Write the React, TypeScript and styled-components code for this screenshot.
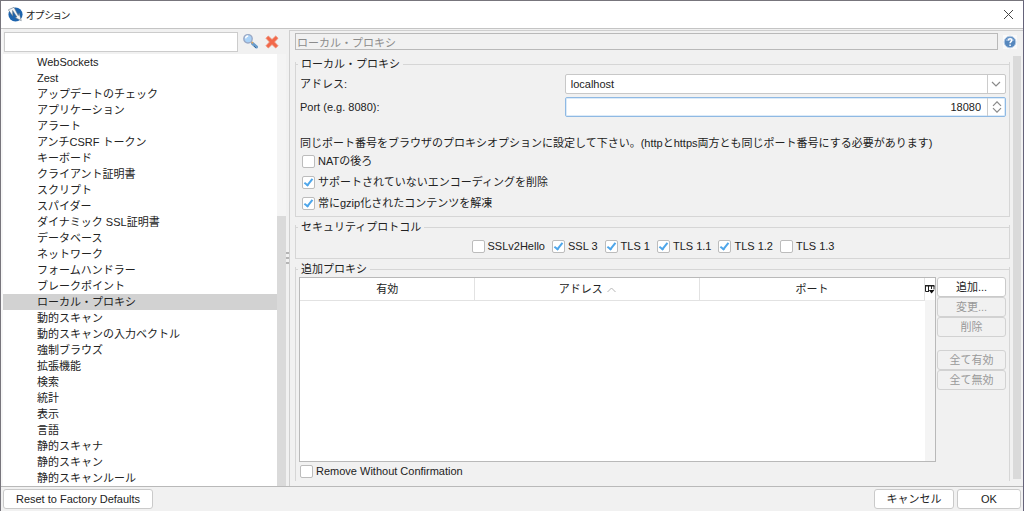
import React from "react";
import styled, { createGlobalStyle, css } from "styled-components";

const GlobalStyle = createGlobalStyle`
  *, *::before, *::after { box-sizing: border-box; }
  body {
    margin: 0;
    background: #f1f1f1;
    color: #222;
    font: 11px/16px "Liberation Sans", "Noto Sans CJK JP", sans-serif;
  }
  button, input, select { font: inherit; color: inherit; margin: 0; }
`;

const line = "#d6d6d6";

const Dialog = styled.div`
  min-height: 100vh;
  display: flex;
  flex-direction: column;
  border: 1px solid #77757c;
  border-right-color: #65637a;
`;

const TitleBar = styled.header`
  height: 28px;
  padding: 0 9px 0 7px;
  display: flex;
  align-items: center;
  gap: 3px;
  background: #fff;
  border-bottom: 1px solid #c4c4c4;
`;

const Title = styled.h1`
  flex: 1;
  margin: 0;
  color: #222;
  font: 400 10px/16px "Noto Sans CJK JP", sans-serif;
  font-feature-settings: "palt";
`;

const IconButton = styled.button`
  display: flex;
  align-items: center;
  justify-content: center;
  padding: 0;
  border: 0;
  background: none;
`;

const Main = styled.main`
  flex: 1;
  display: grid;
  grid-template-columns: 285px 3px minmax(0, 1fr);
`;

const Sidebar = styled.nav`
  display: flex;
  flex-direction: column;
  border-left: 2px solid #f7f7f7;
`;

const SearchRow = styled.form`
  height: 25px;
  display: flex;
  align-items: center;
  gap: 6px;
  padding: 0 7px 0 1px;
`;

const SearchInput = styled.input`
  flex: 1;
  min-width: 0;
  height: 20px;
  margin-right: -2px;
  border: 1px solid #ccc;
  background: #fff;
  padding: 0 4px;
`;

const TreeArea = styled.div`
  flex: 1;
  display: flex;
  background: #fff;
`;

const Tree = styled.ul`
  flex: 1;
  margin: 0;
  padding: 0;
  list-style: none;
`;

const TreeItem = styled.li<{ $selected?: boolean }>`
  height: 16px;
  padding-left: 34px;
  white-space: nowrap;
  background: ${(p) => (p.$selected ? "#d2d2d2" : "transparent")};
`;

const TreeLink = styled.a`
  display: block;
  color: inherit;
  text-decoration: none;
`;

const ScrollTrack = styled.div`
  width: 9px;
  display: flex;
  flex-direction: column;
  background: #f4f4f4;
`;

const ScrollThumb = styled.div`
  flex: 5 0 0;
  background: #dadada;
`;

const ScrollGap = styled.div`
  flex: 3 0 0;
`;

const Splitter = styled.div`
  display: flex;
  flex-direction: column;
  align-items: center;
  justify-content: center;
  gap: 3px;
`;

const Grip = styled.i`
  width: 3px;
  height: 2px;
  background: #b5b5b5;
`;

const Panel = styled.section`
  display: flex;
  flex-direction: column;
  margin-top: 1px;
  padding: 2px 2px 0 5px;
  border-left: 1px solid #cfcfcf;
  border-top: 1px solid #cfcfcf;
`;

const PanelHeader = styled.div`
  display: flex;
  align-items: center;
  gap: 5px;
  padding-right: 4px;
`;

const PanelTitle = styled.input`
  flex: 1;
  min-width: 0;
  height: 17px;
  padding: 0 1px;
  border: 1px solid #b9b9b9;
  background: #f1f1f1;
  color: #8c8c8c;
`;

const PanelBody = styled.div`
  flex: 1;
  display: flex;
  gap: 3px;
  padding-top: 6px;
`;

const Groups = styled.div`
  flex: 1;
  min-width: 0;
  display: flex;
  flex-direction: column;
  gap: 2px;
`;

const BodyScroll = styled.div`
  width: 8px;
  margin-bottom: 7px;
  background: #dadada;
`;

/* The side edges start level with the line that runs beside the heading. */
const Group = styled.section<{ $open?: boolean }>`
  display: flex;
  flex-direction: column;
  padding: 0 3px 0 4px;
  border: solid ${line};
  border-width: ${(p) => (p.$open ? "0 1px" : "0 1px 1px")};
  flex: ${(p) => (p.$open ? "1" : "none")};
  margin-bottom: ${(p) => (p.$open ? "5px" : "0")};
  border-image: linear-gradient(to bottom, transparent 7px, ${line} 7px) 1;
`;

const GroupTitle = styled.h2`
  display: flex;
  align-items: center;
  gap: 3px;
  margin: 0 -3px 0 -4px;
  font-size: 11px;
  font-weight: 400;
  line-height: 16px;
  &::before { content: ""; width: 2px; height: 1px; background: ${line}; }
  &::after { content: ""; flex: 1; height: 1px; background: ${line}; }
`;

const Fields = styled.div`
  display: grid;
  grid-template-columns: 3fr 5fr;
  row-gap: 3px;
  align-items: center;
  padding-top: 2px;
`;

const Combo = styled.div`
  display: grid;
  grid-template-columns: minmax(0, 1fr) 18px;
  align-items: center;
  height: 20px;
  border: 1px solid #c8c8c8;
  border-radius: 2px;
  background: #fff;
  > svg { grid-area: 1 / 2; pointer-events: none; justify-self: center; }
  &::after {
    content: "";
    grid-area: 1 / 2;
    height: 100%;
    border-left: 1px solid #ccc;
    pointer-events: none;
  }
`;

const ComboSelect = styled.select`
  grid-area: 1 / 1 / 2 / 3;
  appearance: none;
  height: 18px;
  padding: 0 5px;
  border: 0;
  background: transparent;
`;

const Spinner = styled.div`
  display: flex;
  height: 20px;
  border: 1px solid #8fb9e3;
  border-radius: 2px;
  background: #fff;
  box-shadow: inset 0 0 0 1px #dcebf9;
`;

const SpinnerInput = styled.input`
  flex: 1;
  min-width: 0;
  padding: 0 6px;
  border: 0;
  background: none;
  text-align: right;
  outline: none;
`;

const SpinnerButton = styled(IconButton)`
  width: 18px;
  border-left: 1px solid #ccc;
`;

const Note = styled.p`
  margin: 18px 0 2px;
  white-space: nowrap;
`;

const CheckLabel = styled.label`
  display: flex;
  align-items: center;
  gap: 3px;
  white-space: nowrap;
`;

const CheckBox = styled.input`
  appearance: none;
  width: 13px;
  height: 13px;
  border: 1px solid #bcbcbc;
  border-radius: 2px;
  background: #fff;
  display: grid;
  place-items: center;
  &:checked::after {
    content: "";
    width: 5px;
    height: 9px;
    margin-top: -2px;
    border: solid #4ea6ea;
    border-width: 0 2px 2px 0;
    transform: rotate(38deg);
  }
`;

const CheckList = styled.div`
  display: flex;
  flex-direction: column;
  gap: 5px;
  padding: 0 0 5px 2px;
`;

const CheckRow = styled.div`
  display: flex;
  justify-content: center;
  gap: 7px;
  padding: 3px 0 4px;
`;

const ProxyArea = styled.div`
  flex: 1;
  display: flex;
  gap: 1px;
`;

const TableFrame = styled.div`
  flex: 1;
  min-width: 0;
  display: flex;
  margin-left: -1px;
  border: 1px solid #b9b9b9;
  background: #fff;
`;

const Table = styled.table`
  flex: 1;
  height: 22px;
  border-collapse: collapse;
  table-layout: fixed;
`;

const Th = styled.th<{ $width: string }>`
  width: ${(p) => p.$width};
  height: 22px;
  padding: 0;
  border: solid #e2e2e2;
  border-width: 0 1px 1px 0;
  font-weight: 400;
  svg { margin-left: 4px; }
`;

const TableGutter = styled.div`
  width: 10px;
  background: #f4f4f4;
`;

const ColumnButton = styled(IconButton)`
  width: 100%;
  height: 22px;
  background: #fff;
`;

const Actions = styled.div`
  width: 69px;
  display: flex;
  flex-direction: column;
`;

const Button = styled.button<{ $width?: string; $gap?: boolean }>`
  width: ${(p) => p.$width ?? "100%"};
  height: 20px;
  padding: 0;
  margin-top: ${(p) => (p.$gap ? "13px" : "0")};
  border: 1px solid #cacaca;
  border-radius: 3px;
  background: #fff;
  white-space: nowrap;
  ${(p) =>
    p.disabled &&
    css`
      color: #999;
      border-color: #d2d2d2;
      background: #f1f1f1;
    `}
`;

const RemoveRow = styled.div`
  padding: 1px 0 2px;
`;

const Footer = styled.footer`
  height: 25px;
  display: flex;
  align-items: center;
  gap: 3px;
  padding: 0 2px;
  border-top: 1px solid #b9b9b9;
`;

const Spacer = styled.span`
  flex: 1;
`;

const treeItems = [
  "WebSockets", "Zest", "アップデートのチェック", "アプリケーション", "アラート",
  "アンチCSRF トークン", "キーボード", "クライアント証明書", "スクリプト", "スパイダー",
  "ダイナミック SSL証明書", "データベース", "ネットワーク", "フォームハンドラー",
  "ブレークポイント", "ローカル・プロキシ", "動的スキャン", "動的スキャンの入力ベクトル",
  "強制ブラウズ", "拡張機能", "検索", "統計", "表示", "言語", "静的スキャナ",
  "静的スキャン", "静的スキャンルール",
];

const protocols: [string, boolean][] = [
  ["SSLv2Hello", false], ["SSL 3", true], ["TLS 1", true],
  ["TLS 1.1", true], ["TLS 1.2", true], ["TLS 1.3", false],
];

const AppLogo = () => (
  <svg width="15" height="15" viewBox="0 0 14 14">
    <circle cx="7" cy="7" r="6.6" fill="#1d64ae" />
    <path d="M.3 2.6 5.6.3 9.600 8 10.400 5.500 12.400 12.800 6.600 9.800 8.300 9.300 4.300 3.200 4.500 8.600Z" fill="#f4f5f6" stroke="#586b7c" strokeWidth=".5" />
  </svg>
);

const Check = ({ label, checked }: { label: string; checked?: boolean }) => (
  <CheckLabel>
    <CheckBox type="checkbox" defaultChecked={checked} />
    {label}
  </CheckLabel>
);

export default function App() {
  return (
    <Dialog>
      <GlobalStyle />
      <TitleBar>
        <AppLogo />
        <Title>オプション</Title>
        <IconButton aria-label="閉じる">
          <svg width="11" height="11" viewBox="0 0 11 11" fill="none" stroke="#444">
            <path d="m1 1 9 9M10 1 1 10" />
          </svg>
        </IconButton>
      </TitleBar>
      <Main>
        <Sidebar>
          <SearchRow>
            <SearchInput type="text" aria-label="検索" />
            <IconButton type="button" aria-label="検索する">
              <svg width="17" height="17" viewBox="0 0 17 17">
                <path d="m10.500 10.500 4 3.500" stroke="#6a9ccb" strokeWidth="3" strokeLinecap="round" />
                <path d="m12 13 2 2" stroke="#3f6b99" strokeWidth="1" />
                <path d="m9 8.400 2 2" stroke="#d7a365" strokeWidth="1.600" />
                <circle cx="6" cy="5.800" r="4.200" fill="#a9d2f8" stroke="#9aa9c6" strokeWidth="1.400" />
                <path d="M3.600 5.400A2.600 2.600 0 0 1 6.200 3" fill="none" stroke="#fff" strokeWidth="1.300" />
              </svg>
            </IconButton>
            <IconButton type="button" aria-label="クリア">
              <svg width="14" height="14" viewBox="0 0 14 14">
                <path d="M3.300 1 7 4.500 10.700 1 13 3.300 9.500 7l3.500 3.700-2.300 2.300L7 9.500 3.300 13 1 10.700 4.500 7 1 3.300Z" fill="#f2684a" stroke="#ee8a70" strokeWidth=".8" strokeLinejoin="round" />
              </svg>
            </IconButton>
          </SearchRow>
          <TreeArea>
            <Tree>
              {treeItems.map((name) => (
                <TreeItem key={name} $selected={name === "ローカル・プロキシ"}>
                  <TreeLink href="#">{name}</TreeLink>
                </TreeItem>
              ))}
            </Tree>
            <ScrollTrack>
              <ScrollGap />
              <ScrollThumb />
            </ScrollTrack>
          </TreeArea>
        </Sidebar>
        <Splitter>
          <Grip />
          <Grip />
          <Grip />
        </Splitter>
        <Panel>
          <PanelHeader>
            <PanelTitle readOnly value="ローカル・プロキシ" aria-label="パネル" />
            <IconButton aria-label="ヘルプ">
              <svg width="14" height="14" viewBox="0 0 14 14">
                <rect width="14" height="14" fill="#fafafa" />
                <circle cx="7" cy="7" r="5.800" fill="#5687bd" stroke="#b4cbe5" />
                <path d="M2.600 6A4.500 4.500 0 0 1 11.400 6Z" fill="#84abd6" />
                <path d="M5.300 5.500c0-2.300 3.500-2.200 3.500-.2 0 1.300-1.700 1.300-1.700 2.900M7.100 9.500V11" fill="none" stroke="#fff" strokeWidth="1.500" />
              </svg>
            </IconButton>
          </PanelHeader>
          <PanelBody>
            <Groups>
              <Group>
                <GroupTitle>ローカル・プロキシ</GroupTitle>
                <Fields>
                  <label htmlFor="address">アドレス:</label>
                  <Combo>
                    <ComboSelect id="address" defaultValue="localhost">
                      <option>localhost</option>
                    </ComboSelect>
                    <svg width="10" height="6" viewBox="0 0 10 6" fill="none" stroke="#8a8a8a" strokeWidth="1.200">
                      <path d="m1 1 4 4 4-4" />
                    </svg>
                  </Combo>
                  <label htmlFor="port">Port (e.g. 8080):</label>
                  <Spinner>
                    <SpinnerInput id="port" type="text" inputMode="numeric" defaultValue="18080" />
                    <SpinnerButton aria-label="増減">
                      <svg width="10" height="12" viewBox="0 0 10 12" fill="none" stroke="#8a8a8a" strokeWidth="1.200">
                        <path d="m1 4.800 4-4 4 4M1 7.200l4 4 4-4" />
                      </svg>
                    </SpinnerButton>
                  </Spinner>
                </Fields>
                <Note>同じポート番号をブラウザのプロキシオプションに設定して下さい。(httpとhttps両方とも同じポート番号にする必要があります)</Note>
                <CheckList>
                  <Check label="NATの後ろ" />
                  <Check label="サポートされていないエンコーディングを削除" checked />
                  <Check label="常にgzip化されたコンテンツを解凍" checked />
                </CheckList>
              </Group>
              <Group>
                <GroupTitle>セキュリティプロトコル</GroupTitle>
                <CheckRow>
                  {protocols.map(([name, on]) => (
                    <Check key={name} label={name} checked={on} />
                  ))}
                </CheckRow>
              </Group>
              <Group $open>
                <GroupTitle>追加プロキシ</GroupTitle>
                <ProxyArea>
                  <TableFrame>
                    <Table>
                      <thead>
                        <tr>
                          <Th $width="28%">有効</Th>
                          <Th $width="36%">
                            アドレス
                            <svg width="9" height="6" viewBox="0 0 9 6" fill="none" stroke="#b5b5b5">
                              <path d="m.5 5 4-4 4 4" />
                            </svg>
                          </Th>
                          <Th $width="36%">ポート</Th>
                        </tr>
                      </thead>
                    </Table>
                    <TableGutter>
                      <ColumnButton aria-label="列の表示">
                        <svg width="10" height="10" viewBox="0 0 10 10">
                          <path d="M.5 1.500h8.500v4M.5 1v6.500H4M3.500 1v6M6.500 1v4M.5 2h9" fill="none" stroke="#222" />
                          <path d="M3.800 6h5.600L6.600 9.500Z" fill="#111" />
                        </svg>
                      </ColumnButton>
                    </TableGutter>
                  </TableFrame>
                  <Actions>
                    <Button>追加...</Button>
                    <Button disabled>変更...</Button>
                    <Button disabled>削除</Button>
                    <Button disabled $gap>全て有効</Button>
                    <Button disabled>全て無効</Button>
                  </Actions>
                </ProxyArea>
                <RemoveRow>
                  <Check label="Remove Without Confirmation" />
                </RemoveRow>
              </Group>
            </Groups>
            <BodyScroll />
          </PanelBody>
        </Panel>
      </Main>
      <Footer>
        <Button $width="150px">Reset to Factory Defaults</Button>
        <Spacer />
        <Button $width="80px">キャンセル</Button>
        <Button $width="64px">OK</Button>
      </Footer>
    </Dialog>
  );
}
